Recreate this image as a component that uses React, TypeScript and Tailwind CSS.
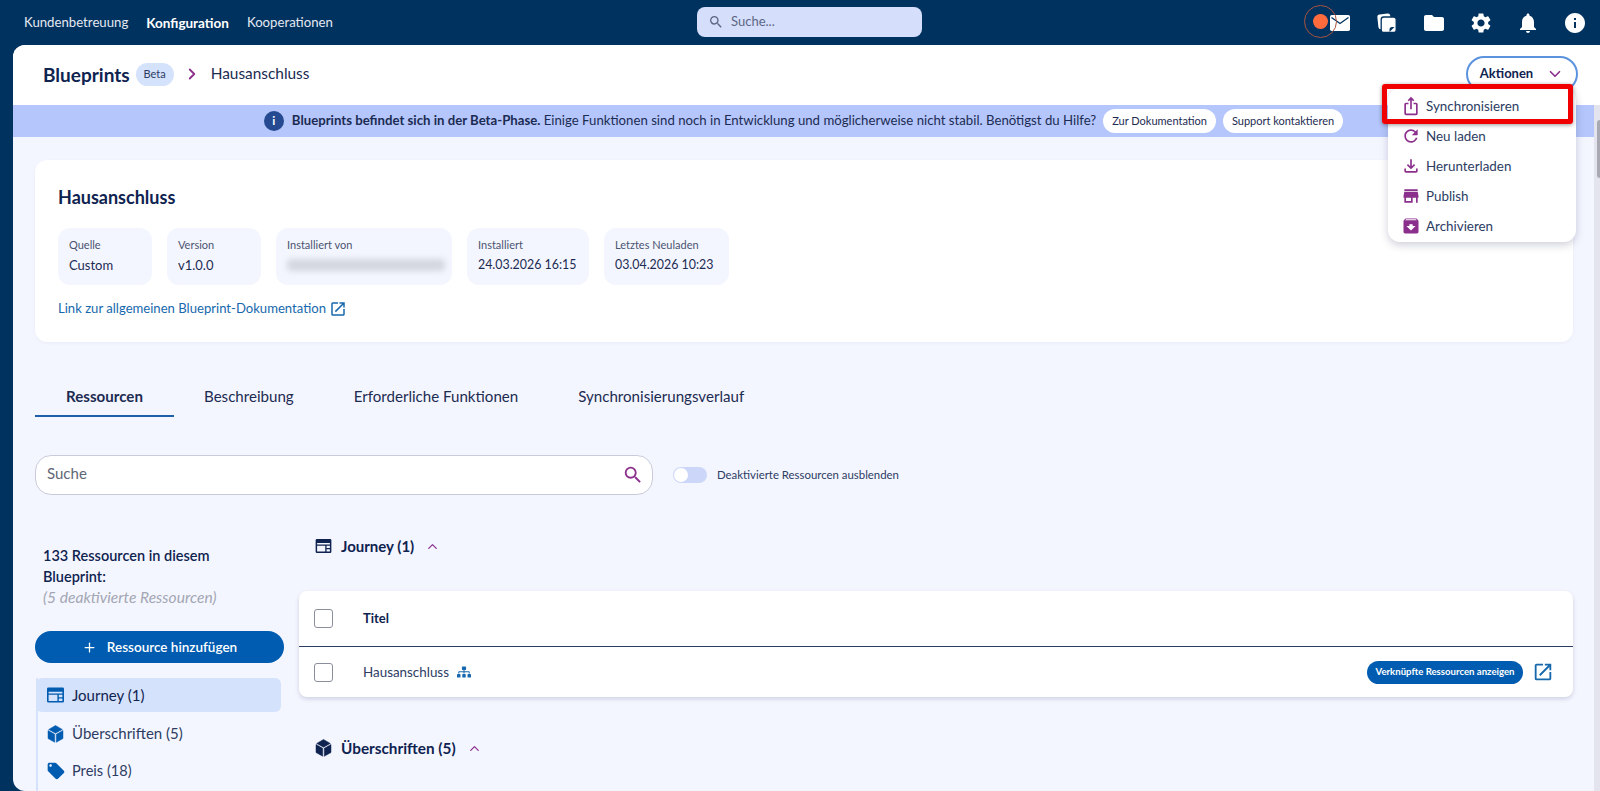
import React from 'react';
import {
  MdArchive,
  MdFolder,
  MdInfo,
  MdIosShare,
  MdLocalOffer,
  MdNotifications,
  MdOpenInNew,
  MdOutlineFileDownload,
  MdRefresh,
  MdSearch,
  MdSettings,
  MdStore,
} from 'react-icons/md';
import { FaSitemap } from 'react-icons/fa';
import { ChevronDown, ChevronRight, ChevronUp, Plus } from 'lucide-react';

const JourneyIcon = ({ className }: { className: string }) => (
  <svg viewBox="0 0 18 16" className={className} fill="currentColor">
    <path d="M1.500 0h15A1.500 1.500 0 0 1 18 1.500v13a1.500 1.500 0 0 1-1.500 1.500h-15A1.500 1.500 0 0 1 0 14.500v-13A1.500 1.500 0 0 1 1.500 0Zm.2 4.500v1.800h14.600V4.500Zm0 3.300v6.500h9.300V7.800Zm10.800 0v2.500h3.800V7.800Zm0 4v2.500h3.800v-2.500Z" fillRule="evenodd" />
  </svg>
);

const CubeIcon = ({ className }: { className: string }) => (
  <svg viewBox="0 0 16 18" className={className} fill="currentColor" stroke="currentColor" strokeWidth="0.5" strokeLinejoin="round">
    <path d="M8 0.500 14.800 4.400 8 8.200 1.200 4.400Z" />
    <path d="M0.500 5.500 7.200 9.300V17.300L0.500 13.500Z" />
    <path d="M15.500 5.500 8.800 9.300V17.300L15.500 13.500Z" />
  </svg>
);

const MailIcon = ({ className }: { className: string }) => (
  <svg viewBox="0 0 20 16" className={className}>
    <rect width="20" height="16" rx="1.800" fill="currentColor" />
    <path d="M1.500 2.500 10 8.500 18.500 2.500" fill="none" stroke="#00325f" strokeWidth="1.300" />
  </svg>
);

const StackIcon = ({ className }: { className: string }) => (
  <svg viewBox="0 0 20 20" className={className}>
    <rect x="0.800" y="1" width="13" height="15" rx="2.500" fill="currentColor" transform="rotate(-6 7 8)" />
    <rect x="4.200" y="4" width="15" height="15.500" rx="2.500" fill="currentColor" stroke="#00325f" strokeWidth="1.300" />
    <path d="M12.500 16.500q0-2.500 2.500-2.500h2.500l-5 5Z" fill="#00325f" />
  </svg>
);

const navItems = [
  { label: 'Kundenbetreuung', active: false },
  { label: 'Konfiguration', active: true },
  { label: 'Kooperationen', active: false },
];

const metaChips = [
  { label: 'Quelle', value: 'Custom', width: 'w-[94px]', date: false },
  { label: 'Version', value: 'v1.0.0', width: 'w-[94px]', date: false },
  { label: 'Installiert von', value: '', width: 'w-[176px]', date: false },
  { label: 'Installiert', value: '24.03.2026 16:15', width: 'w-[122px]', date: true },
  { label: 'Letztes Neuladen', value: '03.04.2026 10:23', width: 'w-[125px]', date: true },
];

const menuItems = [
  { label: 'Synchronisieren', Icon: MdIosShare },
  { label: 'Neu laden', Icon: MdRefresh },
  { label: 'Herunterladen', Icon: MdOutlineFileDownload },
  { label: 'Publish', Icon: MdStore },
  { label: 'Archivieren', Icon: MdArchive },
];

const Checkbox = () => <div className="h-[19px] w-[19px] rounded-[3px] border border-[#8a8f9c] bg-white" />;

export default function App() {
  return (
    <div className="relative flex h-[791px] w-[1600px] flex-col overflow-hidden bg-[#00325f] font-['Lato',sans-serif] text-[#0f2350]">
      {/* top bar */}
      <header className="relative flex h-[45px] shrink-0 items-center pl-6">
        <nav className="flex gap-[18px] pt-[1px] text-[13.2px] text-[#e4e9f2]">
          {navItems.map(item => (
            <span key={item.label} className={item.active ? 'text-[13.5px] font-bold text-white' : ''}>
              {item.label}
            </span>
          ))}
        </nav>
        <div className="absolute left-[697px] top-[7px] flex h-[30px] w-[225px] items-center rounded-lg bg-[#d5defa] pl-[11px] text-[13px] text-[#5c6784]">
          <MdSearch className="mr-[7px] h-4 w-4 text-[#5c6784]" />
          Suche...
        </div>
        <div className="ml-auto flex items-center gap-[23px] pr-[13px] text-white">
          <div className="flex w-6 justify-center"><MailIcon className="h-4 w-5" /></div>
          <div className="flex w-6 justify-center"><StackIcon className="h-5 w-5" /></div>
          <MdFolder className="h-6 w-6" />
          <MdSettings className="h-6 w-6" />
          <MdNotifications className="h-6 w-6" />
          <MdInfo className="h-6 w-6" />
        </div>
        <div className="absolute left-[1304px] top-[5px] flex h-[33px] w-[33px] items-center justify-center rounded-full border border-[#a9533f]">
          <div className="h-[15px] w-[15px] rounded-full bg-[#ff6b3d]" />
        </div>
      </header>

      {/* panel */}
      <div className="ml-[13px] flex min-h-0 flex-1 flex-col overflow-hidden rounded-l-xl bg-[#f4f6ff]">
        <div className="flex h-[60px] shrink-0 items-center bg-white pb-[2px] pl-[30px] pr-[22px]">
          <span className="text-[19px] font-bold leading-none text-[#0f2350]">Blueprints</span>
          <span className="ml-[6px] flex h-[23px] w-[38px] items-center justify-center rounded-full bg-[#d5e2fb] text-[11px] text-[#2c3c63]">Beta</span>
          <ChevronRight className="ml-[9px] h-[18px] w-[18px] text-[#8b2f8c]" strokeWidth={2.4} />
          <span className="ml-[10px] text-[15.4px] text-[#1c2b52]">Hausanschluss</span>
          <div className="ml-auto flex h-[36px] w-[112px] items-center justify-center gap-[13px] rounded-full border-2 border-[#5b93de] bg-white text-[13px] font-bold">
            Aktionen
            <ChevronDown className="h-[18px] w-[18px] text-[#8b2f8c]" strokeWidth={2.2} />
          </div>
        </div>

        <div className="flex min-h-0 flex-1">
          <div className="flex min-w-0 flex-1 flex-col">
            <div className="flex h-[32px] shrink-0 items-center justify-center gap-[7px] bg-[#b4c6fb] text-[13.2px] text-[#1c2b52]">
              <div className="flex h-5 w-5 items-center justify-center rounded-full bg-[#254a91] text-[12px] font-bold text-white">i</div>
              <span className="ml-[1px]">
                <b>Blueprints befindet sich in der Beta-Phase.</b> Einige Funktionen sind noch in Entwicklung und möglicherweise nicht stabil. Benötigst du Hilfe?
              </span>
              <span className="flex h-[24px] items-center rounded-full bg-white px-[9px] text-[11px]">Zur Dokumentation</span>
              <span className="flex h-[24px] items-center rounded-full bg-white px-[9px] text-[11px]">Support kontaktieren</span>
            </div>

            <main className="min-h-0 flex-1 pl-[22px] pr-[21px] pt-[23px]">
              {/* info card */}
              <section className="h-[182px] rounded-xl bg-white pl-[23px] pt-[26px] shadow-[0_1px_3px_rgba(40,60,120,0.06)]">
                <h2 className="text-[18px] font-bold leading-[22px]">Hausanschluss</h2>
                <div className="mt-[20px] flex gap-[15px]">
                  {metaChips.map(chip => (
                    <div key={chip.label} className={`h-[57px] rounded-xl bg-[#f4f6ff] px-[11px] pt-[9px] ${chip.width}`}>
                      <div className="text-[11px] leading-[15px] text-[#4a5470]">{chip.label}</div>
                      {chip.value ? (
                        <div className={`mt-[4px] whitespace-nowrap leading-[18px] text-[#1c2b52] ${chip.date ? 'text-[12.4px]' : 'text-[13px]'}`}>{chip.value}</div>
                      ) : (
                        <div className="mt-[7px] h-[12px] w-[158px] rounded-sm bg-[#d3d6df] blur-[3px]" />
                      )}
                    </div>
                  ))}
                </div>
                <a className="mt-[14px] flex items-center gap-[3px] text-[13.1px] text-[#1768ac]">
                  Link zur allgemeinen Blueprint-Dokumentation
                  <MdOpenInNew className="h-[18px] w-[18px]" />
                </a>
              </section>

              {/* tabs */}
              <div className="mt-[38px] flex text-[15.1px] text-[#1c2b52]">
                <div className="flex h-[37px] w-[139px] items-start justify-center border-b-2 border-[#1d5fa8] pt-[5px] font-bold">Ressourcen</div>
                <div className="ml-[30px] pt-[5px]">Beschreibung</div>
                <div className="ml-[60px] pt-[5px]">Erforderliche Funktionen</div>
                <div className="ml-[60px] pt-[5px]">Synchronisierungsverlauf</div>
              </div>

              {/* search row */}
              <div className="mt-[38px] flex items-center">
                <div className="flex h-[40px] w-[618px] items-center justify-between rounded-2xl border border-[#c9cbdb] bg-white pb-[3px] pl-[11px] pr-[8px] text-[15px] text-[#5f6675]">
                  Suche
                  <MdSearch className="mt-[3px] h-[22px] w-[22px] text-[#8b2f8c]" />
                </div>
                <div className="ml-[20px] flex h-[16px] w-[34px] items-center rounded-full bg-[#cbd6f8]">
                  <div className="ml-[1px] h-[14px] w-[14px] rounded-full bg-white" />
                </div>
                <span className="ml-[10px] text-[11.4px] text-[#2c3c63]">Deaktivierte Ressourcen ausblenden</span>
              </div>

              <div className="mt-[40px] flex">
                {/* sidebar */}
                <aside className="w-[264px] shrink-0">
                  <div className="mt-[10px] w-[205px] pl-2 text-[14.5px] font-semibold leading-[21px]">
                    133 Ressourcen in diesem Blueprint:
                    <div className="whitespace-nowrap text-[15.6px] font-normal italic text-[#a3a6b3]">(5 deaktivierte Ressourcen)</div>
                  </div>
                  <button className="mt-[23px] flex h-[32px] w-[249px] items-center justify-center gap-[10px] rounded-full bg-[#005cb0] text-[13.5px] font-semibold text-white">
                    <Plus className="h-[15px] w-[15px]" strokeWidth={2} />
                    Ressource hinzufügen
                  </button>
                  <div className="ml-[1px] mt-[15px] w-[245px] border-l-2 border-[#d5e2fb] text-[15px]">
                    <div className="-ml-[2px] flex h-[34px] items-center gap-[8px] rounded-md bg-[#d5e2fb] pl-[11px]">
                      <JourneyIcon className="h-[16px] w-[17px] text-[#005cb0]" />
                      Journey (1)
                    </div>
                    <div className="flex h-[43px] items-center gap-[8px] pl-[9px] text-[#2c3c63]">
                      <CubeIcon className="h-[18px] w-[17px] text-[#005cb0]" />
                      Überschriften (5)
                    </div>
                    <div className="flex h-[32px] items-center gap-[6px] pl-[8px] text-[14.6px] text-[#2c3c63]">
                      <MdLocalOffer className="h-[20px] w-[20px] text-[#005cb0]" />
                      Preis (18)
                    </div>
                    <div className="h-[30px]" />
                  </div>
                </aside>

                {/* resource list */}
                <div className="min-w-0 flex-1">
                  <div className="ml-[16px] flex h-[22px] items-center text-[15px] font-bold">
                    <JourneyIcon className="h-[14px] w-[17px] text-[#0f2350]" />
                    <span className="ml-[9px]">Journey (1)</span>
                    <ChevronUp className="ml-[11px] h-[15px] w-[15px] text-[#8b2f8c]" strokeWidth={2} />
                  </div>
                  <div className="mt-[34px] h-[106px] rounded-lg bg-white shadow-[0_2px_4px_rgba(40,50,90,0.18)]">
                    <div className="flex h-[56px] items-center border-b border-[#2c3c63] pl-[15px] text-[13px] font-bold">
                      <Checkbox />
                      <span className="ml-[30px]">Titel</span>
                    </div>
                    <div className="flex h-[50px] items-center pl-[15px] pr-[19px] text-[13.4px] text-[#2c3c63]">
                      <Checkbox />
                      <span className="ml-[30px]">Hausanschluss</span>
                      <FaSitemap className="ml-[8px] h-[14px] w-[14px] text-[#1768ac]" />
                      <span className="ml-auto flex h-[23px] w-[156px] items-center justify-center rounded-full bg-[#005cb0] text-[9.6px] font-bold text-white">Verknüpfte Ressourcen anzeigen</span>
                      <MdOpenInNew className="ml-[9px] h-[22px] w-[22px] text-[#1768ac]" />
                    </div>
                  </div>
                  <div className="ml-[16px] mt-[40px] flex h-[22px] items-center text-[15.3px] font-bold">
                    <CubeIcon className="h-[18px] w-[17px] text-[#0f2350]" />
                    <span className="ml-[9px]">Überschriften (5)</span>
                    <ChevronUp className="ml-[11px] h-[15px] w-[15px] text-[#8b2f8c]" strokeWidth={2} />
                  </div>
                </div>
              </div>
            </main>
          </div>
          <div className="w-[6px] shrink-0 bg-[#e4e4ee] pt-[15px]">
            <div className="ml-auto h-[58px] w-[3px] rounded-l-sm bg-[#a9a9b3]" />
          </div>
        </div>
      </div>

      {/* actions menu */}
      <div className="absolute left-[1388px] top-[88px] w-[188px] rounded-xl bg-white pb-[1px] pt-[3px] text-[13.4px] text-[#2c3c63] shadow-[0_3px_8px_rgba(30,40,80,0.22)]">
        {menuItems.map(({ label, Icon }) => (
          <div key={label} className="flex h-[30px] items-center gap-[5px] pl-[13px]">
            <Icon className="h-5 w-5 text-[#8b2f8c]" />
            {label}
          </div>
        ))}
      </div>
      <div className="absolute left-[1382px] top-[84px] h-[40px] w-[191px] rounded-[3px] border-[5px] border-[#f00000] shadow-[0_1px_4px_rgba(0,0,0,0.4)]" />
    </div>
  );
}
